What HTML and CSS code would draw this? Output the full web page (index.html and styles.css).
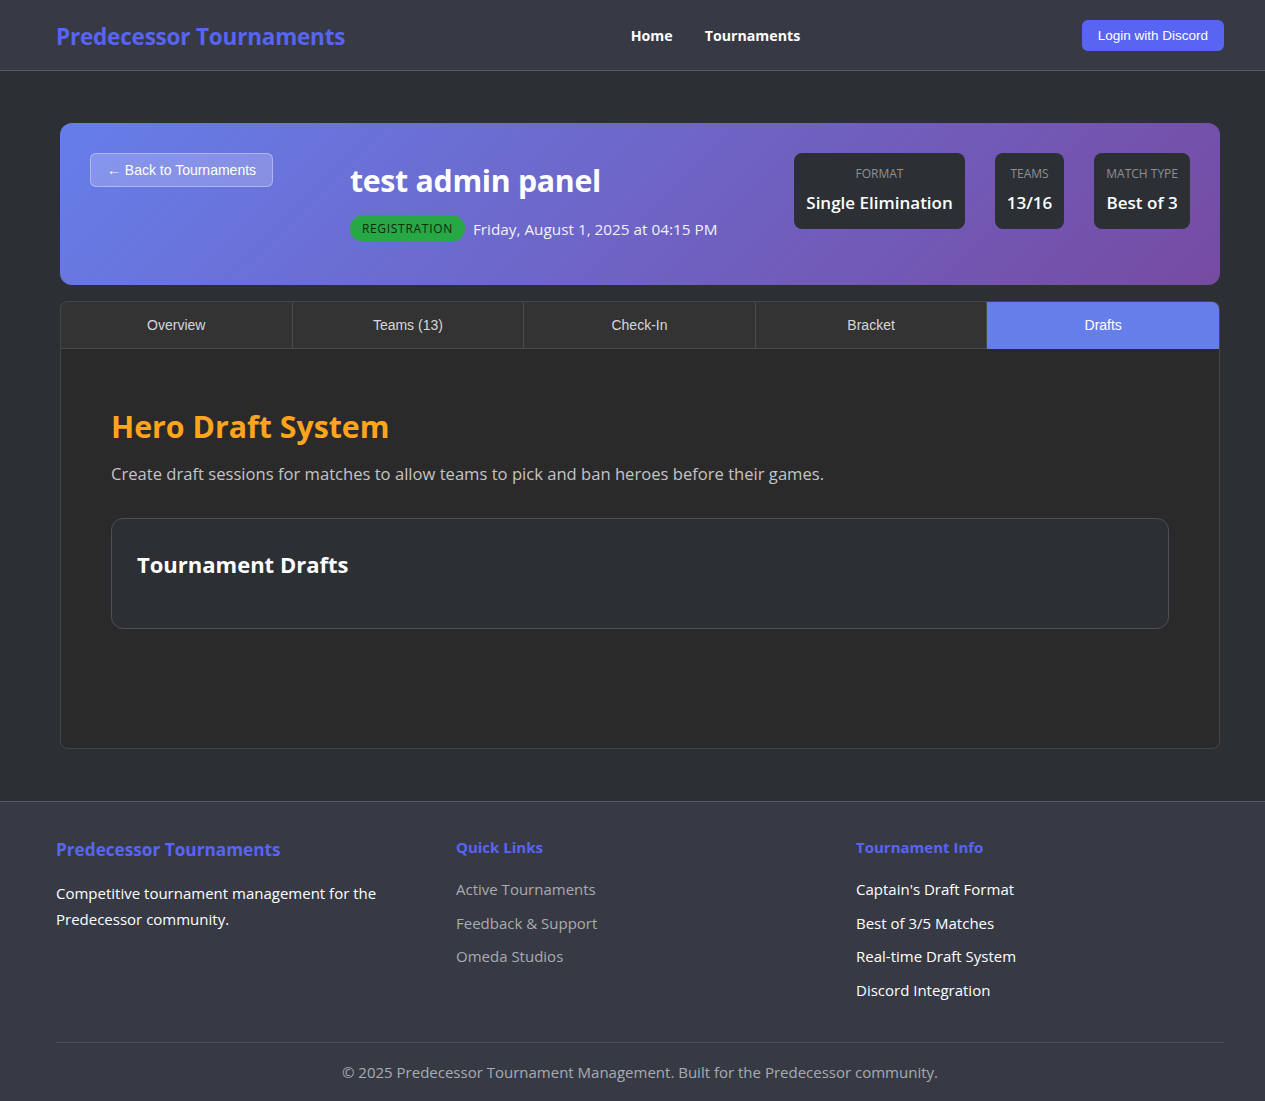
FILE: index.html
```html
<!DOCTYPE html>
<html lang="en">
<head>
<meta charset="utf-8">
<title>Predecessor Tournaments</title>
<link rel="stylesheet" href="styles.css">
</head>
<body>
<header class="site-header">
  <div class="header-inner">
    <a class="logo" href="#">Predecessor Tournaments</a>
    <nav class="nav">
      <a href="#">Home</a>
      <a href="#">Tournaments</a>
    </nav>
    <button class="login-btn">Login with Discord</button>
  </div>
</header>

<main class="main">
  <div class="container">
    <section class="hero">
      <a class="back-btn" href="#">← Back to Tournaments</a>
      <div class="hero-title">
        <h1>test admin panel</h1>
        <div class="hero-meta">
          <span class="badge">REGISTRATION</span>
          <span class="date">Friday, August 1, 2025 at 04:15 PM</span>
        </div>
      </div>
      <div class="stats">
        <div class="stat"><div class="stat-label">FORMAT</div><div class="stat-value">Single Elimination</div></div>
        <div class="stat"><div class="stat-label">TEAMS</div><div class="stat-value">13/16</div></div>
        <div class="stat"><div class="stat-label">MATCH TYPE</div><div class="stat-value">Best of 3</div></div>
      </div>
    </section>

    <div class="tabs">
      <button class="tab">Overview</button>
      <button class="tab">Teams (13)</button>
      <button class="tab">Check-In</button>
      <button class="tab">Bracket</button>
      <button class="tab active">Drafts</button>
    </div>

    <section class="panel">
      <h2 class="panel-title">Hero Draft System</h2>
      <p class="panel-desc">Create draft sessions for matches to allow teams to pick and ban heroes before their games.</p>
      <div class="card">
        <h3>Tournament Drafts</h3>
      </div>
    </section>
  </div>
</main>

<footer class="site-footer">
  <div class="footer-inner">
    <div class="footer-grid">
      <div class="fcol">
        <h3 class="fbrand">Predecessor Tournaments</h3>
        <p class="fabout">Competitive tournament management for the Predecessor community.</p>
      </div>
      <div class="fcol">
        <h4>Quick Links</h4>
        <ul class="links muted">
          <li>Active Tournaments</li>
          <li>Feedback &amp; Support</li>
          <li>Omeda Studios</li>
        </ul>
      </div>
      <div class="fcol">
        <h4>Tournament Info</h4>
        <ul class="links">
          <li>Captain's Draft Format</li>
          <li>Best of 3/5 Matches</li>
          <li>Real-time Draft System</li>
          <li>Discord Integration</li>
        </ul>
      </div>
    </div>
    <div class="copyright">© 2025 Predecessor Tournament Management. Built for the Predecessor community.</div>
  </div>
</footer>
</body>
</html>
```

FILE: styles.css
```css
* { box-sizing: border-box; }
html, body { margin: 0; padding: 0; }
body {
  background: #2c2f34;
  color: #ffffff;
  font-family: "Open Sans", "Noto Sans", sans-serif;
}
a { text-decoration: none; color: inherit; }

.site-header {
  background: #373a44;
  border-bottom: 1px solid #555862;
  height: 71px;
}
.header-inner {
  width: 1168px;
  margin-left: 56px;
  height: 70px;
  display: flex;
  align-items: center;
  justify-content: space-between;
}
.logo {
  color: #5865f2;
  font-weight: 700;
  font-size: 22.5px;
  letter-spacing: -0.2px;
  margin-top: 2px;
}
.nav { display: flex; gap: 32px; margin-left: 4px; }
.nav a {
  color: #fff;
  font-weight: 700;
  font-size: 14.2px;
}
.login-btn {
  background: #5865f2;
  color: #fff;
  border: none;
  border-radius: 6px;
  font-family: "Liberation Sans", Arial, sans-serif;
  font-size: 13.5px;
  height: 31px;
  padding: 0 16px;
  margin-top: 1px;
}

.main { padding: 52px 0 52px; }
.container { width: 1160px; margin-left: 60px; }

.hero {
  background: linear-gradient(135deg, #667eea 0%, #764ba2 100%);
  border-radius: 12px;
  height: 162px;
  padding: 30px;
  display: flex;
  justify-content: space-between;
  align-items: flex-start;
}
.back-btn {
  display: inline-block;
  background: rgba(255,255,255,0.2);
  border: 1px solid rgba(255,255,255,0.35);
  border-radius: 6px;
  color: #fff;
  font-family: "Liberation Sans", Arial, sans-serif;
  font-size: 14px;
  line-height: 16px;
  padding: 8px 0;
  height: 34px;
  width: 183px;
  text-align: center;
  white-space: nowrap;
}
.hero-title { padding-top: 7px; }
.hero-title h1 {
  margin: 0;
  font-size: 30.3px;
  font-weight: 700;
  line-height: 42px;
  letter-spacing: -0.3px;
}
.hero-meta {
  display: flex;
  align-items: center;
  gap: 8px;
  margin-top: 13px;
}
.badge {
  background: #28a745;
  color: #0c2a12;
  border-radius: 14px;
  font-size: 12px;
  letter-spacing: 0.7px;
  padding: 0 12px;
  height: 27px;
  line-height: 27px;
}
.date { color: #f1f1f8; font-size: 15.3px; }

.stats { display: flex; gap: 30px; }
.stat {
  background: #2c2f34;
  border-radius: 8px;
  height: 76px;
  padding: 12px 12px 0;
  text-align: center;
}
.stat-label {
  color: #8d8f95;
  font-size: 12px;
  line-height: 18px;
}
.stat-value {
  font-size: 17px;
  font-weight: 600;
  margin-top: 8px;
  line-height: 24px;
}

.tabs {
  margin-top: 16px;
  display: grid;
  grid-template-columns: repeat(5, 1fr);
  background: #333333;
  border: 1px solid #464646;
  border-bottom: none;
  border-radius: 8px 8px 0 0;
  overflow: hidden;
}
.tab {
  background: #333333;
  color: #d8d8d8;
  border: none;
  border-right: 1px solid #4a4a4a;
  border-bottom: 1px solid #464646;
  font-family: "Liberation Sans", Arial, sans-serif;
  font-size: 14px;
  height: 47px;
}
.tab:last-child { border-right: none; }
.tab.active { background: #667eea; color: #fff; border-bottom-color: #667eea; }

.panel {
  background: #2a2a2a;
  border: 1px solid #444;
  border-top: none;
  border-radius: 0 0 8px 8px;
  min-height: 400px;
  padding: 58px 50px 50px;
}
.panel-title {
  margin: 0;
  color: #ffa51d;
  font-size: 30.3px;
  font-weight: 700;
  line-height: 40px;
}
.panel-desc {
  margin: 15px 0 0;
  color: #c4c4c4;
  font-size: 16.6px;
  line-height: 24px;
}
.card {
  margin-top: 32px;
  background: #2c2f34;
  border: 1px solid #4c4f57;
  border-radius: 12px;
  height: 111px;
  padding: 30px 25px;
}
.card h3 {
  margin: 0;
  font-size: 22px;
  font-weight: 700;
  line-height: 30px;
}

.site-footer {
  background: #373a44;
  border-top: 1px solid #555862;
}
.footer-inner { width: 1168px; margin-left: 56px; padding-top: 33px; }
.footer-grid {
  display: grid;
  grid-template-columns: repeat(3, 1fr);
  gap: 32px;
}
.fbrand {
  margin: 1px 0 0;
  color: #5865f2;
  font-size: 17.2px;
  font-weight: 700;
  line-height: 28px;
}
.fabout {
  margin: 16px 0 0;
  font-size: 15px;
  line-height: 26px;
  color: #fff;
}
.fcol h4 {
  margin: 0;
  color: #5865f2;
  font-size: 15px;
  font-weight: 700;
  line-height: 24px;
}
.links { list-style: none; margin: 19px 0 0; padding: 0; }
.links li { font-size: 15px; line-height: 22px; margin-bottom: 11.5px; color: #fff; }
.links.muted li { color: #a9abb0; }
.copyright {
  margin-top: 30px;
  border-top: 1px solid #4c4f58;
  text-align: center;
  color: #a9abb0;
  font-size: 15px;
  padding: 18px 0 19px;
  line-height: 22px;
}
```
